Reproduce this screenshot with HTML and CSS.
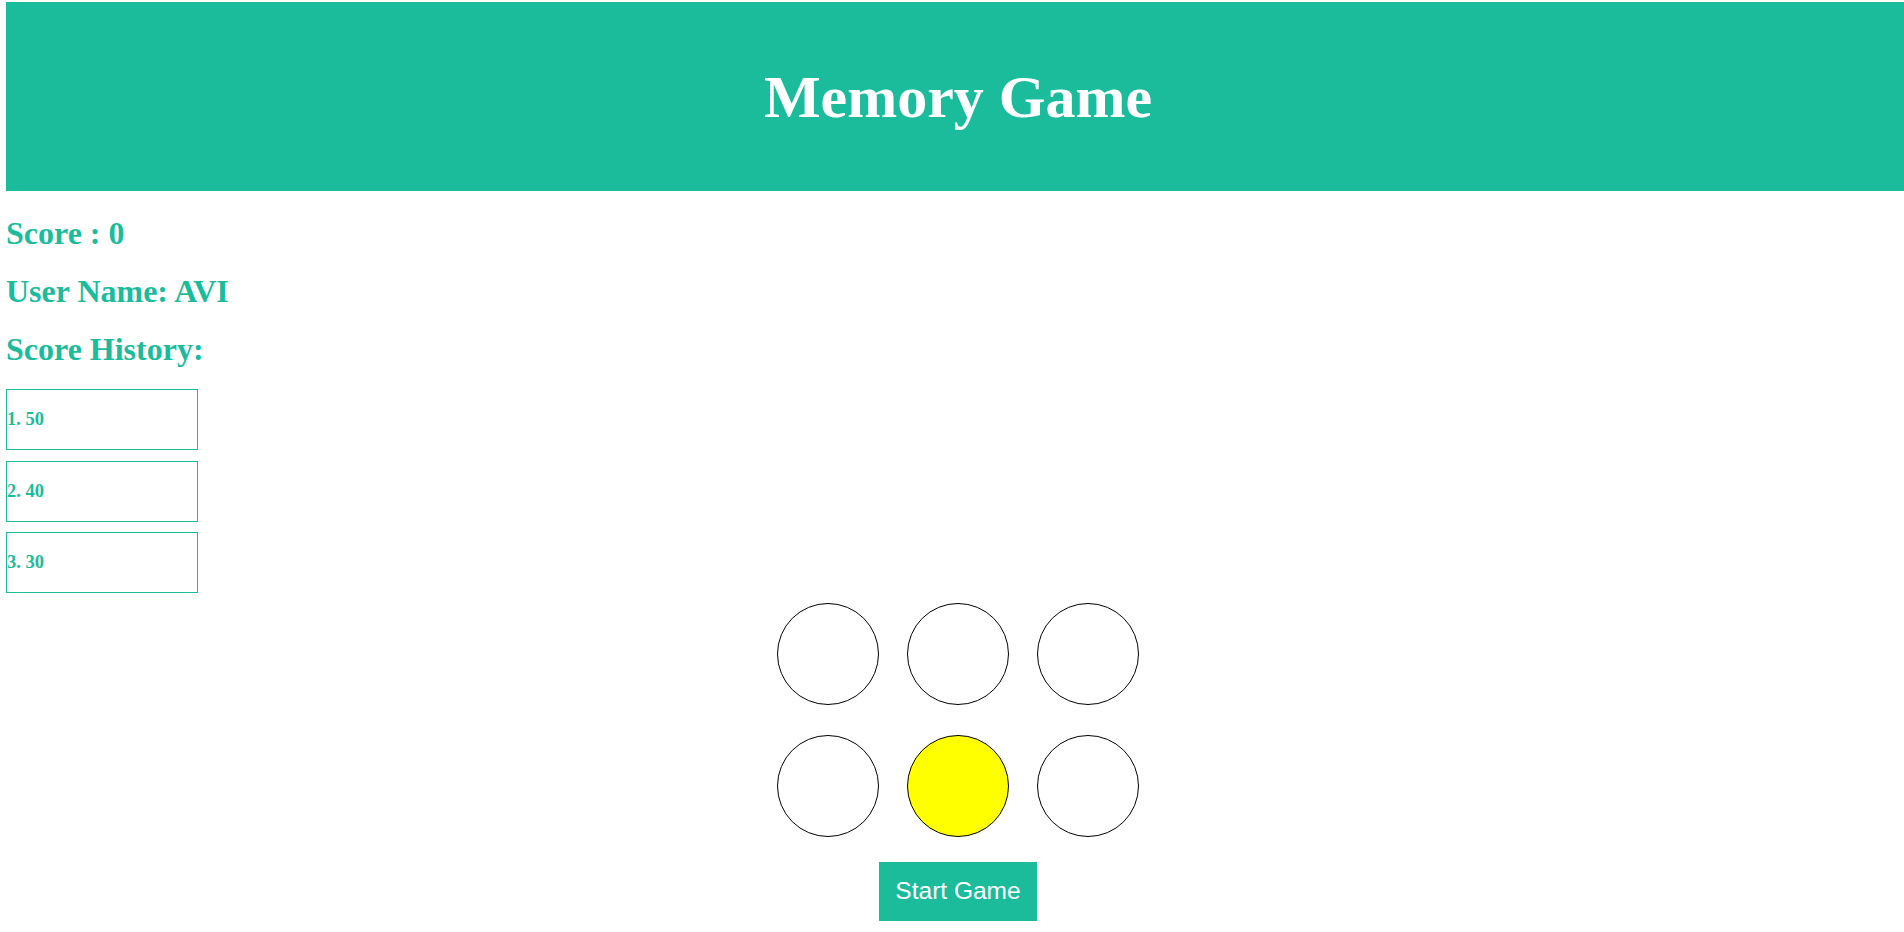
FILE: index.html
```html
<!DOCTYPE html>
<html lang="en">
<head>
<meta charset="utf-8">
<title>Memory Game</title>
<link rel="stylesheet" href="styles.css">
</head>
<body>
<div class="page">
  <header class="banner">
    <h1 class="title">Memory Game</h1>
  </header>
  <h2 class="info first">Score : 0</h2>
  <h2 class="info">User Name: AVI</h2>
  <h2 class="info">Score History:</h2>
  <div class="history">
    <div class="entry">1. 50</div>
    <div class="entry">2. 40</div>
    <div class="entry">3. 30</div>
  </div>
  <div class="board">
    <div class="cell"></div>
    <div class="cell"></div>
    <div class="cell"></div>
    <div class="cell"></div>
    <div class="cell lit"></div>
    <div class="cell"></div>
  </div>
  <div class="actions">
    <button class="start">Start Game</button>
  </div>
</div>
</body>
</html>
```

FILE: styles.css
```css
html, body {
  margin: 0;
  padding: 0;
  overflow: hidden;
  background: #ffffff;
}

body {
  font-family: "Liberation Serif", "Times New Roman", serif;
}

.page {
  width: 100%;
  margin-left: 6px;
  padding-top: 2px;
}

.banner {
  height: 189px;
  background: #1abc9c;
  display: flex;
  align-items: center;
  justify-content: center;
}

.title {
  margin: 0;
  color: #ffffff;
  font-size: 60px;
  line-height: 69px;
  font-weight: bold;
  padding-top: 1px;
}

.info {
  margin: 22px 0 0;
  color: #1abc9c;
  font-size: 32px;
  line-height: 36px;
  font-weight: bold;
}

.info.first {
  margin-top: 23.5px;
}

.history {
  margin-top: 22.5px;
  display: flex;
  flex-direction: column;
  gap: 10.5px;
}

.entry {
  box-sizing: border-box;
  width: 192px;
  height: 61px;
  border: 1px solid #1abc9c;
  color: #1abc9c;
  font-size: 18.5px;
  font-weight: bold;
  display: flex;
  align-items: center;
}

.board {
  margin: 9.6px auto 0;
  width: 362px;
  display: grid;
  grid-template-columns: repeat(3, 102px);
  column-gap: 28px;
  row-gap: 30px;
}

.cell {
  box-sizing: border-box;
  width: 102px;
  height: 102px;
  border: 1px solid #000000;
  border-radius: 50%;
  background: #ffffff;
}

.cell.lit {
  background: #ffff00;
}

.actions {
  display: flex;
  justify-content: center;
  margin-top: 25px;
}

.start {
  box-sizing: border-box;
  height: 59px;
  width: 158px;
  padding: 0;
  border: none;
  background: #1abc9c;
  color: #ffffff;
  font-family: "Liberation Sans", Arial, sans-serif;
  font-size: 24.5px;
}
```
